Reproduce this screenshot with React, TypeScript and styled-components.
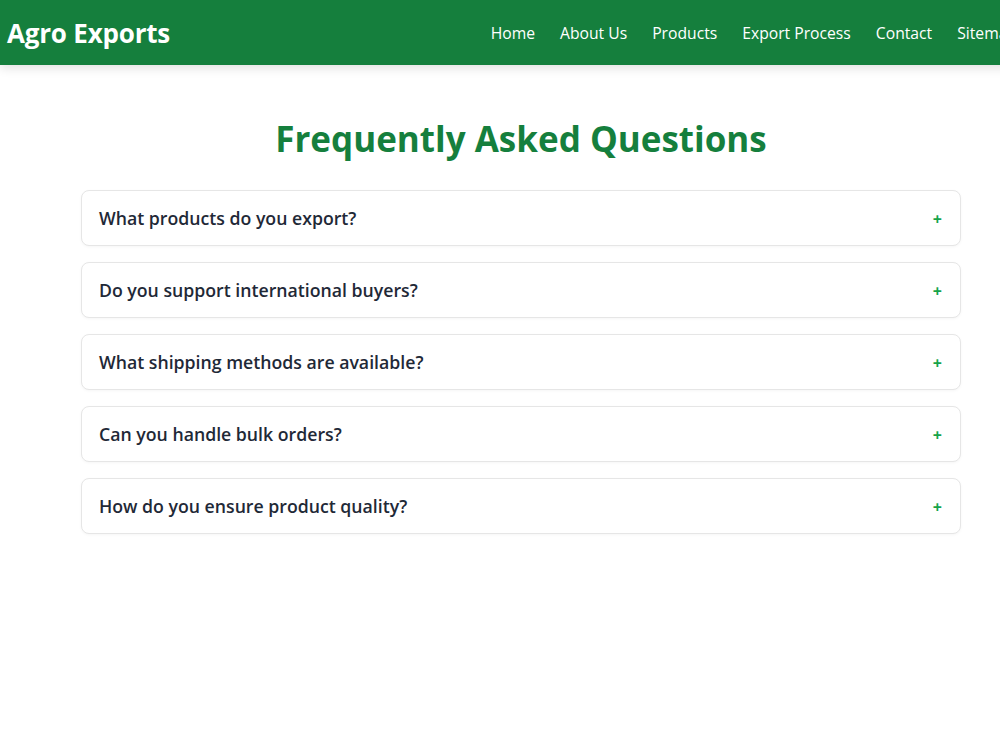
import styled, { createGlobalStyle } from "styled-components"

const GlobalStyle = createGlobalStyle`
  html, body {
    margin: 0;
    padding: 0;
    overflow: hidden;
    background: #ffffff;
    font-family: "Open Sans", "Noto Sans", sans-serif;
  }
  * {
    box-sizing: border-box;
  }
`

const faqs = [
  "What products do you export?",
  "Do you support international buyers?",
  "What shipping methods are available?",
  "Can you handle bulk orders?",
  "How do you ensure product quality?",
]

const navLinks = ["Home", "About Us", "Products", "Export Process", "Contact", "Sitemap"]

// the original page is a bit wider than the window, so everything sits on a 1042px canvas
const Page = styled.div`
  width: 1042px;
  min-height: 750px;
`

const Header = styled.header`
  height: 65px;
  background: #157f3d;
  display: flex;
  align-items: center;
  justify-content: space-between;
  padding: 0 25px 0 7px;
  box-shadow: 0 3px 10px rgba(0, 0, 0, 0.12);
`

const Logo = styled.div`
  color: #ffffff;
  font-size: 26px;
  font-weight: 700;
  letter-spacing: -0.2px;
`

const Nav = styled.nav`
  display: flex;
  gap: 25px;
`

const NavLink = styled.a`
  color: #ffffff;
  font-size: 15.7px;
  text-decoration: none;
  cursor: pointer;
`

const FaqSection = styled.section`
  max-width: 880px;
  margin: 0 auto;
  padding-top: 51px;
`

const Title = styled.h1`
  margin: 0 0 28px;
  text-align: center;
  color: #157f3d;
  font-size: 35px;
  font-weight: 700;
  line-height: 1.3;
`

const FaqList = styled.div`
  display: flex;
  flex-direction: column;
  gap: 16px;
`

const FaqItem = styled.div`
  height: 56px;
  display: flex;
  align-items: center;
  justify-content: space-between;
  padding: 2px 18px 0 17px;
  border: 1px solid #e6e6e6;
  border-radius: 8px;
  background: #ffffff;
  box-shadow: 0 1px 3px rgba(0, 0, 0, 0.04);
  cursor: pointer;
`

const Question = styled.span`
  color: #1f2937;
  font-size: 17.7px;
  font-weight: 600;
  margin-top: -2px;
`

const Plus = styled.span`
  color: #16a34a;
  font-size: 16px;
  font-weight: 700;
`

export default function App() {
  return (
    <Page>
      <GlobalStyle />
      <Header>
        <Logo>Agro Exports</Logo>
        <Nav>
          {navLinks.map((link) => (
            <NavLink key={link}>{link}</NavLink>
          ))}
        </Nav>
      </Header>
      <FaqSection>
        <Title>Frequently Asked Questions</Title>
        <FaqList>
          {faqs.map((q) => (
            <FaqItem key={q}>
              <Question>{q}</Question>
              <Plus>+</Plus>
            </FaqItem>
          ))}
        </FaqList>
      </FaqSection>
    </Page>
  )
}
